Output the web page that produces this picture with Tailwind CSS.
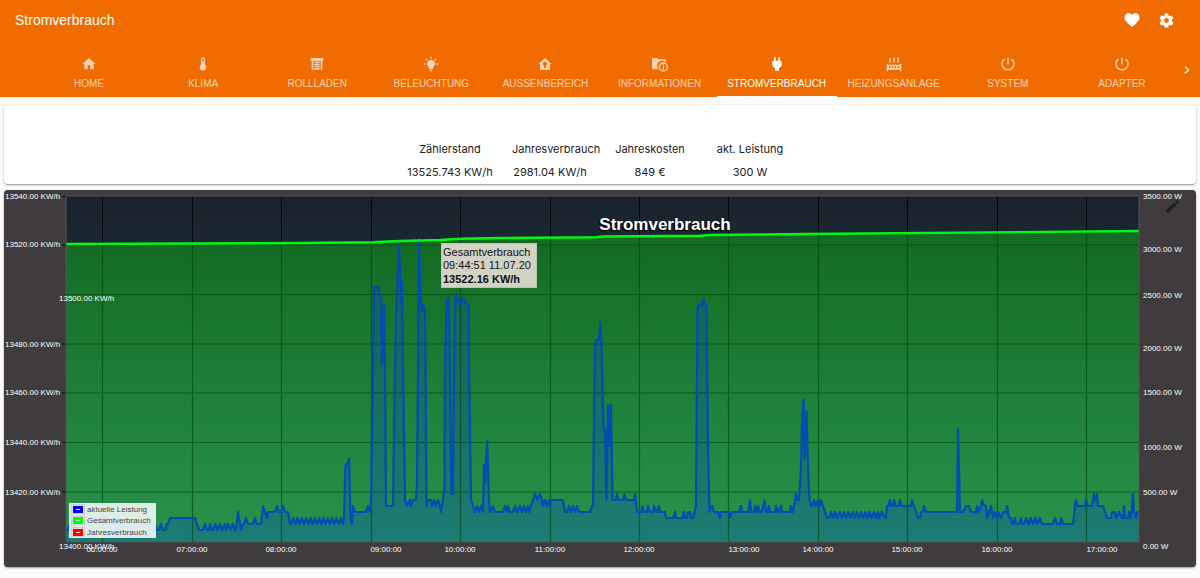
<!DOCTYPE html>
<html lang="de">
<head>
<meta charset="utf-8">
<meta name="viewport" content="width=device-width, initial-scale=1">
<title>Stromverbrauch</title>
<script src="https://cdn.jsdelivr.net/npm/@tailwindcss/browser@4"></script>
</head>
<body class="min-h-screen bg-[#fafafa] font-['Liberation_Sans',Arial,sans-serif]">
<header class="bg-[#f06c00] text-white">
  <div class="flex h-10 items-center justify-between pl-[15px] pr-[25px]">
    <h1 class="text-sm">Stromverbrauch</h1>
    <div class="flex gap-4">
      <button type="button" aria-label="Favoriten" class="flex size-[18px] items-center justify-center"><svg viewBox="0 0 24 24" class="size-[18px] shrink-0 fill-white"><path d="M12,21.35L10.55,20.03C5.4,15.36 2,12.27 2,8.5C2,5.41 4.42,3 7.5,3C9.24,3 10.91,3.81 12,5.08C13.09,3.81 14.76,3 16.5,3C19.58,3 22,5.41 22,8.5C22,12.27 18.6,15.36 13.45,20.03L12,21.35Z"/></svg></button>
      <button type="button" aria-label="Einstellungen" class="flex size-[18px] items-center justify-center"><svg viewBox="0 0 24 24" class="size-[17px] shrink-0 fill-white"><path d="M12,15.5A3.5,3.5 0 0,1 8.5,12A3.5,3.5 0 0,1 12,8.5A3.5,3.5 0 0,1 15.5,12A3.5,3.5 0 0,1 12,15.5M19.43,12.97C19.47,12.65 19.5,12.33 19.5,12C19.5,11.67 19.47,11.34 19.43,11L21.54,9.37C21.73,9.22 21.78,8.95 21.66,8.73L19.66,5.27C19.54,5.05 19.27,4.96 19.05,5.05L16.56,6.05C16.04,5.66 15.5,5.32 14.87,5.07L14.5,2.42C14.46,2.18 14.25,2 14,2H10C9.75,2 9.54,2.18 9.5,2.42L9.13,5.07C8.5,5.32 7.96,5.66 7.44,6.05L4.95,5.05C4.73,4.96 4.46,5.05 4.34,5.27L2.34,8.73C2.21,8.95 2.27,9.22 2.46,9.37L4.57,11C4.53,11.34 4.5,11.67 4.5,12C4.5,12.33 4.53,12.65 4.57,12.97L2.46,14.63C2.27,14.78 2.21,15.05 2.34,15.27L4.34,18.73C4.46,18.95 4.73,19.03 4.95,18.95L7.44,17.94C7.96,18.34 8.5,18.68 9.13,18.93L9.5,21.58C9.54,21.82 9.75,22 10,22H14C14.25,22 14.46,21.82 14.5,21.58L14.87,18.93C15.5,18.67 16.04,18.34 16.56,17.94L19.05,18.95C19.27,19.03 19.54,18.95 19.66,18.73L21.66,15.27C21.78,15.05 21.73,14.78 21.54,14.63L19.43,12.97Z"/></svg></button>
    </div>
  </div>
  <div class="flex pl-8 pt-4">
    <nav class="grid min-w-0 flex-1 grid-cols-[repeat(6,114fr)_120fr_repeat(3,114fr)] text-[10px] leading-3 text-white/70">
      <a href="#home" class="flex flex-col items-center gap-1.5 border-b border-transparent pb-1.5"><svg viewBox="0 0 24 24" class="size-4 fill-current"><path d="M10,20V14H14V20H19V12H22L12,3L2,12H5V20H10Z"/></svg>HOME</a>
      <a href="#klima" class="flex flex-col items-center gap-1.5 border-b border-transparent pb-1.5"><svg viewBox="0 0 24 24" class="size-4 fill-current"><path d="M15 13V5A3 3 0 0 0 9 5V13A5 5 0 1 0 15 13M12 4A1 1 0 0 1 13 5V8H11V5A1 1 0 0 1 12 4Z"/></svg>KLIMA</a>
      <a href="#rollladen" class="flex flex-col items-center gap-1.5 border-b border-transparent pb-1.5"><svg viewBox="0 0 24 24" class="size-4 fill-current"><path d="M2.500 3H21.500V7.500H20V21H17.500V7.500H6.500V21H4V7.500H2.500V3M8 8.500H16V11H8V8.500M8 12H16V14H8V12M8 15H16V17H8V15M8 18H16V20.500H8V18Z"/></svg>ROLLLADEN</a>
      <a href="#beleuchtung" class="flex flex-col items-center gap-1.5 border-b border-transparent pb-1.5"><svg viewBox="0 0 24 24" class="size-4 fill-current"><path d="M12,6A6,6 0 0,1 18,12C18,14.22 16.79,16.16 15,17.2V19A1,1 0 0,1 14,20H10A1,1 0 0,1 9,19V17.2C7.21,16.16 6,14.22 6,12A6,6 0 0,1 12,6M14,21V22A1,1 0 0,1 13,23H11A1,1 0 0,1 10,22V21H14M20,11H23V13H20V11M1,11H4V13H1V11M13,1V4H11V1H13M4.92,3.5L7.05,5.64L5.63,7.05L3.5,4.93L4.92,3.5M16.95,5.63L19.07,3.5L20.5,4.93L18.37,7.05L16.95,5.63Z"/></svg>BELEUCHTUNG</a>
      <a href="#aussenbereich" class="flex flex-col items-center gap-1.5 border-b border-transparent pb-1.5"><svg viewBox="0 0 24 24" class="size-4 fill-current"><path fill-rule="evenodd" d="M12,3L2,12H4.500V21H19.500V12H22L12,3M12,8.500A3.300,3.300 0 0,1 13.400,14.700V18H10.600V14.700A3.300,3.300 0 0,1 12,8.500Z"/></svg>AUSSENBEREICH</a>
      <a href="#informationen" class="flex flex-col items-center gap-1.5 border-b border-transparent pb-1.5"><svg viewBox="0 0 24 24" class="size-4 fill-current"><path fill-rule="evenodd" d="M8 3L10 5H19A2 2 0 0 1 21 7V9.500A7.600 7.600 0 0 0 9.800 20H2A2 2 0 0 1 0 18V5A2 2 0 0 1 2 3H8M17 9.500A7 7 0 1 1 17 23.500A7 7 0 1 1 17 9.500M17 11.500A5 5 0 1 0 17 21.500A5 5 0 1 0 17 11.500M16 12.500H18V14.300H16V12.500M16 15.300H18V20.500H16V15.300Z"/></svg>INFORMATIONEN</a>
      <a href="#stromverbrauch" aria-current="page" class="flex flex-col items-center gap-1.5 border-b border-white pb-1.5 text-white"><svg viewBox="0 0 24 24" class="size-4 fill-current"><path d="M16.500,7V2H14V7H10V2H7.500V7C6.500,7 5,8 5,9V14.500L9,18.500V22H15V18.500L19,14.500V9C19,8 17.500,7 16.500,7Z"/></svg>STROMVERBRAUCH</a>
      <a href="#heizungsanlage" class="flex flex-col items-center gap-1.5 border-b border-transparent pb-1.5"><svg viewBox="0 0 24 24" class="size-4 fill-current"><path fill-rule="evenodd" d="M7.95,3L6.53,5.19L7.95,7.4L5.95,10.5L4.22,9.6L5.64,7.39L4.22,5.19L6.22,2.09L7.95,3M13.95,2.89L12.53,5.1L13.95,7.3L11.95,10.4L10.22,9.5L11.64,7.3L10.22,5.1L12.22,2L13.95,2.89M20,2.89L18.56,5.1L20,7.3L18,10.4L16.25,9.5L17.67,7.3L16.25,5.1L18.25,2L20,2.89M1,23V12H3V13H21V12H23V23H21V20.500H3V23H1M4.500,15V18H6.500V15H4.500M8.500,15V18H10.500V15H8.500M13,15V18H15V15H13M17.500,15V18H19.500V15H17.500Z"/></svg>HEIZUNGSANLAGE</a>
      <a href="#system" class="flex flex-col items-center gap-1.5 border-b border-transparent pb-1.5"><svg viewBox="0 0 24 24" class="size-4 fill-none stroke-current stroke-2"><path d="M12 2.500V12.500M17.500 4.700A9 9 0 1 1 6.500 4.700"/></svg>SYSTEM</a>
      <a href="#adapter" class="flex flex-col items-center gap-1.5 border-b border-transparent pb-1.5"><svg viewBox="0 0 24 24" class="size-4 fill-none stroke-current stroke-2"><path d="M12 2.500V12.500M17.500 4.700A9 9 0 1 1 6.500 4.700"/></svg>ADAPTER</a>
    </nav>
    <button type="button" aria-label="Weitere Tabs" class="flex w-[21px] shrink-0 justify-center pt-1.5 pr-1.5"><svg viewBox="0 0 24 24" class="size-4 shrink-0 fill-none stroke-white stroke-2"><path d="M9 7L14.500 12L9 17"/></svg></button>
  </div>
</header>
<main class="flex flex-col gap-1.5 px-1 pt-2">
  <section class="flex justify-center rounded-sm bg-white pt-[33px] shadow-[0_1px_2px_rgba(0,0,0,0.4)]">
    <table class="w-[400px] table-fixed text-center font-[Inter,sans-serif] text-[11px] leading-[23px] whitespace-nowrap text-[#222]">
      <thead><tr><th class="font-normal">Zählerstand</th><th class="pl-3 text-left font-normal">Jahresverbrauch</th><th class="font-normal">Jahreskosten</th><th class="font-normal">akt. Leistung</th></tr></thead>
      <tbody><tr><td>13525.743 KW/h</td><td>2981.04 KW/h</td><td>849 €</td><td>300 W</td></tr></tbody>
    </table>
  </section>
  <section class="relative overflow-hidden rounded-sm bg-[#403c3d] shadow-[0_1px_2px_rgba(0,0,0,0.4)]">
    <svg viewBox="4 190 1192 377" class="block h-auto w-full" role="img" aria-label="Stromverbrauch">
      <defs>
        <linearGradient id="night" gradientUnits="userSpaceOnUse" x1="0" y1="196" x2="0" y2="542"><stop offset="0" stop-color="#17222c"/><stop offset="1" stop-color="#34495a"/></linearGradient>
        <linearGradient id="green" gradientUnits="userSpaceOnUse" x1="0" y1="240" x2="0" y2="542"><stop offset="0" stop-color="#146b23"/><stop offset="1" stop-color="#28934d"/></linearGradient>
        <linearGradient id="teal" gradientUnits="userSpaceOnUse" x1="0" y1="240" x2="0" y2="542"><stop offset="0" stop-color="#125f4e"/><stop offset="1" stop-color="#1c7c73"/></linearGradient>
      </defs>
      <rect x="66" y="196" width="1073" height="346" fill="url(#night)"/>
      <path d="M102.500 196V542M192.500 196V542M281.500 196V542M371.500 196V542M460.500 196V542M550.500 196V542M639.500 196V542M728.500 196V542M818.500 196V542M907.500 196V542M997.500 196V542M1086.500 196V542" stroke="#05080b"/>
      <path id="total-area" fill="url(#green)"/>
      <path id="power-area" fill="url(#teal)"/>
      <path d="M102.500 244V542M192.500 244V542M281.500 243V542M371.500 242V542M460.500 239V542M550.500 238V542M639.500 236V542M728.500 235V542M818.500 234V542M907.500 233V542M997.500 232V542M1086.500 232V542M62 245H1139M62 294.500H1139M62 344H1139M62 393H1139M62 442.500H1139M62 492H1139" stroke="#00480a" stroke-opacity=".65" stroke-width="1.200"/>
      <path id="power-line" fill="none" stroke="#024cb6" stroke-width="2.200" stroke-linejoin="round"/>
      <path id="total-line" fill="none" stroke="#00f814" stroke-width="2.400"/>
      <path d="M66 196H1139V542H66Z" fill="none" stroke="#545454"/>
      <path d="M62 196.500H66M62 245H66M62 344H66M62 393H66M62 442.500H66M62 492H66" stroke="#111"/>
      <g fill="#fff" font-size="8">
        <text x="5" y="199">13540.00 KW/h</text><text x="5" y="247">13520.00 KW/h</text><text x="59" y="301">13500.00 KW/h</text><text x="5" y="347">13480.00 KW/h</text><text x="5" y="395">13460.00 KW/h</text><text x="5" y="445">13440.00 KW/h</text><text x="5" y="495">13420.00 KW/h</text><text x="59" y="549">13400.00 KW/h</text>
        <text x="1143" y="199">3500.00 W</text><text x="1143" y="252">3000.00 W</text><text x="1143" y="298">2500.00 W</text><text x="1143" y="351">2000.00 W</text><text x="1143" y="395">1500.00 W</text><text x="1143" y="450">1000.00 W</text><text x="1143" y="495">500.00 W</text><text x="1143" y="549">0.00 W</text>
        <g text-anchor="middle"><text x="102" y="552">06:00:00</text><text x="192" y="552">07:00:00</text><text x="281" y="552">08:00:00</text><text x="386" y="552">09:00:00</text><text x="460" y="552">10:00:00</text><text x="550" y="552">11:00:00</text><text x="639" y="552">12:00:00</text><text x="744" y="552">13:00:00</text><text x="818" y="552">14:00:00</text><text x="907" y="552">15:00:00</text><text x="997" y="552">16:00:00</text><text x="1102" y="552">17:00:00</text></g>
      </g>
      <text x="665" y="230" text-anchor="middle" font-size="17" font-weight="700" fill="#fff" class="[text-shadow:-1px_1px_1px_#000]">Stromverbrauch</text>
      <rect x="441.500" y="243.500" width="95" height="44" fill="#d2d3c5" stroke="#bcc5ae"/>
      <g font-size="11" fill="#111"><text x="443" y="256">Gesamtverbrauch</text><text x="443" y="269">09:44:51 11.07.20</text><text x="443" y="283" font-weight="700">13522.16 KW/h</text></g>
      <rect x="69" y="503" width="87" height="35" fill="#fff" fill-opacity=".85"/>
      <g stroke="#ccc"><rect x="71.500" y="504.500" width="13" height="9" fill="#ddd"/><rect x="71.500" y="516" width="13" height="9" fill="#ddd"/><rect x="71.500" y="527.500" width="13" height="9" fill="#ddd"/></g>
      <rect x="73" y="506" width="10" height="7" fill="#00f"/><rect x="73" y="517" width="10" height="7" fill="#0f0"/><rect x="73" y="529" width="10" height="7" fill="#f00"/>
      <path d="M76 509.500H80M76 520.500H80M76 532.500H80" stroke="#ddd"/>
      <g font-size="8" fill="#444"><text x="87" y="512">aktuelle Leistung</text><text x="87" y="523">Gesamtverbrauch</text><text x="87" y="535">Jahresverbrauch</text></g>
    </svg>
    <button type="button" aria-label="Bearbeiten" class="absolute top-2 right-[15px]"><svg viewBox="0 0 24 24" class="size-[17px] fill-[#222]"><path d="M20.71,7.04C21.1,6.65 21.1,6 20.71,5.63L18.37,3.29C18,2.9 17.35,2.9 16.96,3.29L15.12,5.12L18.87,8.87M3,17.25V21H6.75L17.81,9.93L14.06,6.18L3,17.25Z"/></svg></button>
  </section>
</main>
<script>
// Alternates between two levels from x0 to x1 in steps of about two units.
function zig(x0, x1, low, high) {
  const n = Math.round((x1 - x0) / 4.4) * 2, out = [];
  for (let i = 0; i <= n; i++) out.push(x0 + (x1 - x0) * i / n, i % 2 ? high : low);
  return out;
}
const power = [
  66,530, 68,530, 70,524, 84,524, 86,518, 105,518, 107,524, 115,524, 117,530, 119,524, 155,524, 157,530, 159,530, 161,524, 163,530, 165,530, 167,524, 168,524, 170,518, 195,518, 197,524, 199,530, 203,530, 205,524, 207,530, 209,530, 210,524, 212,530,
  ...zig(213, 222, 530, 524), 225,524, ...zig(226, 235, 530, 524), 236,530, 238,512, 240,524, 241,530, 243,524, 244,524, 246,518, 248,524, 253,524, 255,518, 257,524, 261,524, 263,506, 265,512, 267,518, 268,512, 275,512, 277,506, 279,512, 281,512, 283,506, 285,512, 288,512, 290,524,
  ...zig(291, 343, 524, 518), 344,518, 345.5,465, 347.5,464, 349,458, 350.5,518, 352,524, 353,506, 355,512, 366,512, 368,506, 370,512, 371,500, 373,370, 374,287, 378,287, 379,292, 381,295, 382,365, 384,304, 385,370, 386,506, 393,506, 395,370, 396.5,300, 399,245, 401,305, 402,280, 403,370, 405,500, 407,506, 410,500, 411,506, 413,500, 416,500, 417,485, 418,370, 419,239, 420.5,295, 422,311, 423,305, 425,310, 425.5,370, 426.5,506, 428,500, 431,500,
  ...zig(432, 440, 506, 500), 441,512, 443,500, 444.5,485, 445,370, 446.5,305, 447.5,298, 449,298, 450,370, 451.5,494, 453,494, 454,370, 455,305, 456,293, 458,300, 459,304, 460.5,304, 462,298, 464,299, 466,304, 468.5,305, 469,370, 471,500, 473,506,
  ...zig(475, 483, 512, 506), 484,465, 485,483, 487,441, 489,500, 490,512, 493,506, 495,512, 503,512, 505,506, 507,512, 508,506, 510,512, 513,512, 515,506, 517,512, 520,506, 522,512, 524,506, 526,512, 528,506, 529,512, 531,506, 533,500, 535,494, 537,500, 540,494, 542,500, 543,506, 545,500, 547,506, 549,500, 550,506, 551,500, 563,500, 565,512, 567,512, 569,506, 571,512, 573,506, 575,512, 577,506, 579,512, 590,512, 592,506, 593,506,
  595,350, 596,340, 599,340, 600.5,322, 602,363, 603.5,429, 605,429, 606.5,500, 608,405, 610,446, 611,405, 612.5,500, 615.5,500, 617,494, 618,500, 623,500, 624.5,494, 626,500, 634,500, 635,494, 637,512, 641,512, 642.5,506, 644,512, 647,512, 648,506, 650,512, 653,512, 654,506, 656,512, 657,512, 659,506, 660,512, 665,512, 666,518, 673,518, 675,512, 676,518, 682,518, 684,512, 685,518, 687,518, 688,512, 690,512, 691,518, 693,518, 694.5,512, 696,506,
  697.5,310, 698.5,305, 702,305, 703.5,298.5, 704.5,305, 706.5,305, 708,447, 709.5,512, 711,506, 712.5,506, 714,512, 718,512, 720,518, 721,512, 729,512, 730,518, 731.5,512, 739,512, 741,506, 742,512, 748,512, 750,500, 751,512, 754,512, 755,506, 757,512, 758,506, 760,512, 762,512, 764.5,500, 766,512, 767,512, 769,506, 770,512, 775,512, 776,506, 778,512, 779,512, 781,506, 782,512, 790,512, 791,506, 793,512, 794,506, 796,494, 797,500, 799,500,
  801,467, 802,423, 803.5,399, 804.5,459, 806.5,411, 808,467, 809.5,500, 811,506, ...zig(812, 820, 506, 500), 821,500, 823,506, 825,512, 827,518,
  ...zig(829, 876, 518, 512), 878,512, ...zig(879, 885, 518, 512), 886,518, 887,506, 888,506, 890,500, 891,506, 893,506, 894,500, 896,506, 899,506, 900,500, 902,506, 911,506, 912,500, 914,506, 916,512, 918,518, 920,518, 921,512, 923,512, 924,506, 926,512, 957,512, 958,429, 960,512, 963,512, 966,506, 969,506, 971,512, 976,512, 977,506, 979,512, 981,506, 982,500, 984,506, 986,506, 987,518, 989,512, 991,506, 993,518, 995,512, 997,518, 998,512, 1001,518, 1003,512, 1006,512, 1007,506, 1009,518, 1011,518, 1012,524, 1013,524, 1015,518, 1016,524, 1019,524, 1021,518, 1022,524,
  ...zig(1024, 1042, 524, 518), 1043,524, 1053,524, 1055,518, 1057,524, 1060,524, 1061,518, 1063,524, 1073,524, 1075,506, 1076,500, 1078,506, 1085,506, 1086,500, 1088,506, 1092,506, 1094,494, 1095,500, 1097,494, 1098,506, 1103,506, 1105,512, 1107,518, 1111,518, 1112,512, 1115,512, ...zig(1116, 1122, 518, 512), 1123,518, 1124,506, 1125,518, 1128,518, 1129,512, 1131,518, 1133,494, 1134,512, 1136,518, 1137,512, 1139,512
];
const total = [66,244, 300,243, 372,242.3, 400,241, 440,240, 460,238.8, 500,238, 596,237.2, 603,236.5, 700,235.7, 710,235, 806,234, 1139,231];
for (const [name, pts] of [["power", power], ["total", total]]) {
  const line = "M" + pts.join(" ");
  document.getElementById(name + "-line").setAttribute("d", line);
  document.getElementById(name + "-area").setAttribute("d", line + " V542 H66 Z");
}
</script>
</body>
</html>
